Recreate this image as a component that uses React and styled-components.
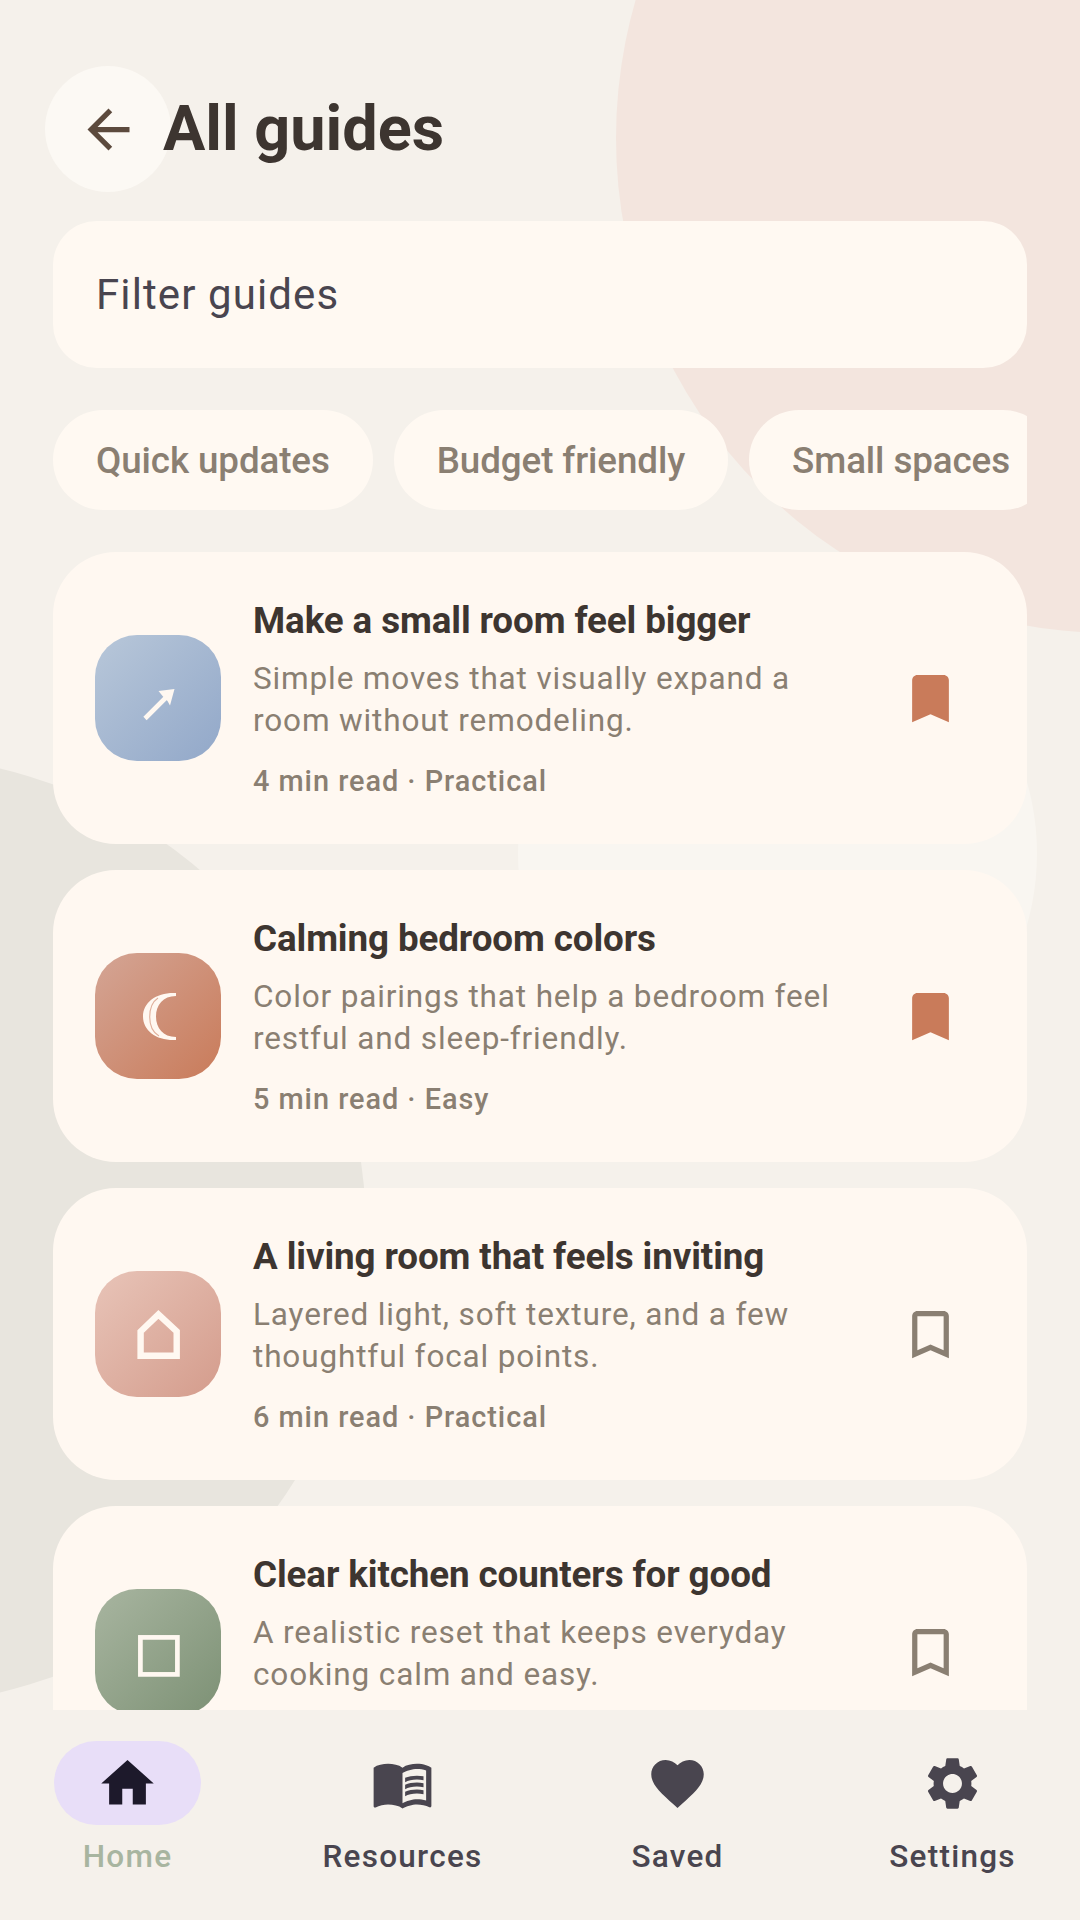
import React from 'react'
import styled, { createGlobalStyle } from 'styled-components'
import {
  MdArrowBack,
  MdBookmark,
  MdBookmarkBorder,
  MdFavorite,
  MdHome,
  MdMenuBook,
  MdSettings,
} from 'react-icons/md'

const GlobalStyle = createGlobalStyle`
  html, body {
    margin: 0;
    padding: 0;
    background: #f5f1eb;
    font-family: Roboto, "Noto Sans", sans-serif;
  }
  * {
    box-sizing: border-box;
  }
`

const ArrowGlyph = () => (
  <svg width="126" height="126" viewBox="0 0 126 126">
    <path d="M50 83.5L73 60.5" stroke="#fff8f1" strokeWidth="4.6" fill="none" />
    <path d="M79.5 54L63.5 56L68 61.5L72.5 66L75 70.5Z" fill="#fff8f1" />
  </svg>
)

const MoonGlyph = () => (
  <svg width="126" height="126" viewBox="0 0 126 126">
    <path
      d="M81 40C62 39 48 49 48 63.5C48 78 62 88 81 87V84C68 84 61 75 61 63.5C61 52 68 43 81 43Z"
      fill="#fff8f1"
    />
    <path d="M63 45C57 49 54.7 56 54.7 64C54.7 72 57 79 64 83" stroke="#e0b09c" strokeWidth="1.1" fill="none" />
  </svg>
)

const HouseGlyph = () => (
  <svg width="126" height="126" viewBox="0 0 126 126">
    <path d="M45.6 84.8V60.5L63.4 43.5L81.7 60.5V84.8Z" stroke="#fff8f1" strokeWidth="6.4" fill="none" />
  </svg>
)

const SquareGlyph = () => (
  <svg width="126" height="126" viewBox="0 0 126 126">
    <rect x="45.4" y="48.4" width="37" height="37" stroke="#fff8f1" strokeWidth="4.7" fill="none" />
  </svg>
)

const chips = ['Quick updates', 'Budget friendly', 'Small spaces']

const guides = [
  {
    title: 'Make a small room feel bigger',
    text: 'Simple moves that visually expand a room without remodeling.',
    meta: '4 min read · Practical',
    from: '#b8c7d9',
    to: '#92a8c9',
    Glyph: ArrowGlyph,
    saved: true,
  },
  {
    title: 'Calming bedroom colors',
    text: 'Color pairings that help a bedroom feel restful and sleep-friendly.',
    meta: '5 min read · Easy',
    from: '#d4a595',
    to: '#c97b5a',
    Glyph: MoonGlyph,
    saved: true,
  },
  {
    title: 'A living room that feels inviting',
    text: 'Layered light, soft texture, and a few thoughtful focal points.',
    meta: '6 min read · Practical',
    from: '#e8c4b8',
    to: '#d49c8c',
    Glyph: HouseGlyph,
    saved: false,
  },
  {
    // the meta line of this card sits below the nav in the screenshot
    title: 'Clear kitchen counters for good',
    text: 'A realistic reset that keeps everyday cooking calm and easy.',
    meta: '',
    from: '#a8b5a0',
    to: '#7d9175',
    Glyph: SquareGlyph,
    saved: false,
  },
]

const tabs = [
  { label: 'Home', Icon: MdHome, active: true },
  { label: 'Resources', Icon: MdMenuBook },
  { label: 'Saved', Icon: MdFavorite },
  { label: 'Settings', Icon: MdSettings },
]

const App = () => (
  <Screen>
    <GlobalStyle />
    <PeachBlob />
    <PaleBlob />
    <StoneBlob />
    <Main>
      <Header>
        <BackButton>
          <MdArrowBack size={63} />
        </BackButton>
        <Title>All guides</Title>
      </Header>
      <FilterField>Filter guides</FilterField>
      <ChipRow>
        {chips.map((chip) => (
          <Chip key={chip}>{chip}</Chip>
        ))}
      </ChipRow>
      <GuideList>
        {guides.map(({ title, text, meta, from, to, Glyph, saved }) => (
          <GuideCard key={title}>
            <Tile $from={from} $to={to}>
              <Glyph />
            </Tile>
            <GuideBody>
              <GuideTitle>{title}</GuideTitle>
              <GuideText>{text}</GuideText>
              <GuideMeta>{meta}</GuideMeta>
            </GuideBody>
            <SaveButton $saved={saved}>
              {saved ? <MdBookmark size={63} /> : <MdBookmarkBorder size={63} />}
            </SaveButton>
          </GuideCard>
        ))}
      </GuideList>
    </Main>
    <BottomNav>
      {tabs.map(({ label, Icon, active }) => (
        <NavItem key={label}>
          <NavPill $active={active}>
            <Icon size={63} />
          </NavPill>
          <NavLabel $active={active}>{label}</NavLabel>
        </NavItem>
      ))}
    </BottomNav>
  </Screen>
)

export default App

const Screen = styled.div`
  position: relative;
  display: flex;
  flex-direction: column;
  width: 1080px;
  height: 1920px;
  overflow: hidden;
  background: #f5f1eb;
`

const PeachBlob = styled.div`
  position: absolute;
  top: -357px;
  left: 616px;
  width: 990px;
  height: 990px;
  border-radius: 50%;
  background: #f3e5de;
`

const PaleBlob = styled.div`
  position: absolute;
  top: 594px;
  left: 518px;
  width: 519px;
  height: 519px;
  border-radius: 50%;
  background: #f9f6f1;
`

const StoneBlob = styled.div`
  position: absolute;
  top: 756px;
  left: -583px;
  width: 949px;
  height: 949px;
  border-radius: 50%;
  background: #e8e5de;
`

const Main = styled.main`
  position: relative;
  flex: 1;
  min-height: 0;
  display: flex;
  flex-direction: column;
  padding: 66px 53px 0;
  overflow: hidden;
`

const Header = styled.header`
  display: flex;
  align-items: center;
  margin-left: -8px;
`

const BackButton = styled.div`
  flex: 0 0 126px;
  height: 126px;
  display: flex;
  align-items: center;
  justify-content: center;
  border-radius: 50%;
  background: #fcf9f4;
  color: #5c4a3d;
`

const Title = styled.h1`
  margin: 0 0 0 -8px;
  font-size: 63px;
  font-weight: 700;
  line-height: 84px;
  color: #3d3530;
`

const FilterField = styled.div`
  flex: none;
  display: flex;
  align-items: center;
  height: 147px;
  margin-top: 29px;
  padding: 0 43px;
  border-radius: 44px;
  background: #fff9f2;
  font-size: 42px;
  letter-spacing: 1.1px;
  color: #49454f;
`

const ChipRow = styled.div`
  flex: none;
  display: flex;
  gap: 21px;
  margin-top: 42px;
  overflow: hidden;
`

const Chip = styled.div`
  flex: none;
  display: flex;
  align-items: center;
  height: 100px;
  padding: 0 43px;
  border-radius: 50px;
  background: #fff9f2;
  font-size: 36.75px;
  font-weight: 500;
  letter-spacing: -0.1px;
  color: #8a7f72;
`

const GuideList = styled.div`
  flex: 1;
  min-height: 0;
  display: flex;
  flex-direction: column;
  gap: 26px;
  margin-top: 42px;
  overflow: hidden;
`

const GuideCard = styled.article`
  flex: none;
  display: flex;
  align-items: center;
  height: 292px;
  padding: 0 31px 0 42px;
  border-radius: 63px;
  background: #fff8f1;
`

const Tile = styled.div`
  flex: 0 0 126px;
  height: 126px;
  border-radius: 42px;
  background: linear-gradient(135deg, ${(p) => p.$from}, ${(p) => p.$to});
  svg {
    display: block;
  }
`

const GuideBody = styled.div`
  flex: 1;
  min-width: 0;
  margin-left: 32px;
`

const GuideTitle = styled.div`
  font-size: 36.75px;
  font-weight: 700;
  line-height: 55px;
  letter-spacing: -0.1px;
  color: #3d3530;
`

const GuideText = styled.p`
  margin: 10px 0 0;
  font-size: 31.5px;
  line-height: 42px;
  letter-spacing: 0.86px;
  color: #8a7f72;
`

const GuideMeta = styled.div`
  min-height: 44px;
  margin-top: 17px;
  font-size: 28.875px;
  font-weight: 500;
  line-height: 44px;
  letter-spacing: 0.97px;
  color: #8a7f72;
`

const SaveButton = styled.div`
  flex: 0 0 132px;
  display: flex;
  justify-content: center;
  color: ${(p) => (p.$saved ? '#c97b5a' : '#8a7f72')};
`

const BottomNav = styled.nav`
  position: relative;
  flex: 0 0 210px;
  display: flex;
  justify-content: space-between;
  padding: 31px 54px 0 54px;
  background: #f5f1eb;
`

const NavItem = styled.div`
  flex: 0 0 147px;
  min-width: 0;
  display: flex;
  flex-direction: column;
  align-items: center;
`

const NavPill = styled.div`
  display: flex;
  align-items: center;
  justify-content: center;
  width: 147px;
  height: 84px;
  border-radius: 42px;
  background: ${(p) => (p.$active ? '#e8def8' : 'transparent')};
  color: ${(p) => (p.$active ? '#1d192b' : '#49454f')};
`

const NavLabel = styled.div`
  margin-top: 10px;
  font-size: 31.5px;
  font-weight: 500;
  line-height: 44px;
  letter-spacing: 1.25px;
  white-space: nowrap;
  color: ${(p) => (p.$active ? '#a8b5a0' : '#49454f')};
`
